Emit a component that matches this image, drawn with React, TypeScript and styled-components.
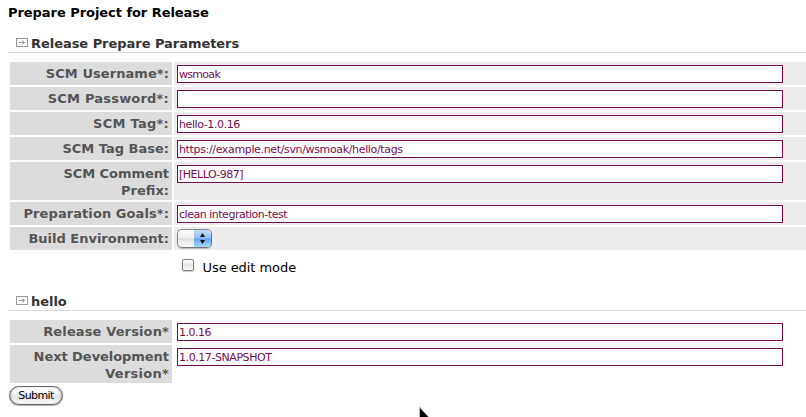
import React from "react";
import styled, { createGlobalStyle } from "styled-components";

const GlobalStyle = createGlobalStyle`
  * { box-sizing: border-box; }
  html, body { margin: 0; background: #fff; overflow: hidden; }
  body { font-family: Verdana, "DejaVu Sans", sans-serif; color: #000; }
`;

const Page = styled.main`
  position: relative;
  width: 806px;
  height: 417px;
  padding: 4px 0 0 8px;
  overflow: hidden;
`;

const Title = styled.h1`
  margin: 0;
  height: 29px;
  font-size: 13px;
  line-height: 18px;
  letter-spacing: -0.05px;
`;

const Heading = styled.h2`
  display: flex;
  align-items: center;
  gap: 3px;
  margin: 0 0 9px;
  padding: 2px 0 0 8px;
  height: 20px;
  border-bottom: 1px solid #d9d9d9;
  color: #333;
  font-size: 13px;
  line-height: 17px;
  letter-spacing: -0.04px;
  white-space: nowrap;
`;

const ArrowSvg = styled.svg`
  flex: none;
  width: 12px;
  height: 9px;
  margin-bottom: 2px;
`;

const Rows = styled.div`
  display: grid;
  gap: 2px;
  padding-left: 2px;
`;

const Row = styled.div<{ $tall?: boolean }>`
  display: grid;
  grid-template-columns: 162px 632px;
  gap: 2px;
  height: ${(p) => (p.$tall ? 38 : 23)}px;
`;

const Label = styled.label`
  padding: 3px 3px 0 0;
  background: #dcdcdc;
  color: #555;
  font-size: 13px;
  font-weight: bold;
  line-height: 17px;
  text-align: right;
`;

const LabelLine = styled.span<{ $spacing?: number }>`
  display: block;
  letter-spacing: ${(p) => p.$spacing ?? 0}px;
  white-space: nowrap;
`;

const Cell = styled.div<{ $plain?: boolean }>`
  padding: 3px 0 0 3px;
  background: ${(p) => (p.$plain ? "transparent" : "#ededed")};
`;

const Input = styled.input<{ $spacing?: number }>`
  display: block;
  width: 606px;
  height: 18px;
  margin: 0;
  padding: 1px 1px 0;
  border: 1px solid #720d4e;
  border-radius: 0;
  outline: 0;
  background: #fff;
  color: #720d4e;
  font: 11px Verdana, "DejaVu Sans", sans-serif;
  letter-spacing: ${(p) => p.$spacing ?? 0}px;
`;

const SelectButton = styled.button`
  display: flex;
  justify-content: flex-end;
  width: 35px;
  height: 19px;
  margin-top: -1px;
  padding: 0;
  border: 1px solid #888;
  border-color: #858585 #587ba8 #777 #858585;
  border-radius: 5px;
  background: linear-gradient(#fff, #eee 48%, #e1e1e1 52%, #fafafa);
  box-shadow: 0 1px 1px #bbb;
  overflow: hidden;
`;

const Stepper = styled.svg`
  width: 17px;
  height: 17px;
  background: linear-gradient(#c2defa, #8dc0f2 47%, #62a5e9 52%, #a5dcff);
`;

const EditMode = styled.label`
  display: flex;
  align-items: flex-start;
  height: 41px;
  padding: 9px 0 0 174px;
  font-size: 13px;
  line-height: 17px;
  letter-spacing: -0.06px;
`;

const Checkbox = styled.input`
  appearance: none;
  width: 12px;
  height: 12px;
  margin: 0 8.5px 0 0;
  border: 1px solid #7d7d7d;
  border-radius: 2px;
  background: linear-gradient(#fff, #e5e5e5 50%, #f8f8f8);
  box-shadow: 0 1px 1px #ccc;
`;

const Submit = styled.button`
  display: block;
  width: 54px;
  height: 19px;
  margin: 3px 0 0 1px;
  padding: 0;
  border: 1px solid #686868;
  border-radius: 10px;
  background: linear-gradient(#fff, #f0f0f0 48%, #e1e1e1 52%, #fafafa);
  box-shadow: 0 1px 1px #aaa, inset 1px 0 1px #aaa, inset -1px 0 1px #aaa;
  color: #000;
  font: 11px/17px Verdana, "DejaVu Sans", sans-serif;
  letter-spacing: -0.6px;
`;

const Pointer = styled.svg`
  position: absolute;
  left: 418px;
  top: 406px;
  width: 14px;
  height: 11px;
`;

const SectionArrow = () => (
  <ArrowSvg viewBox="0 0 12 9" fill="none">
    <rect x=".5" y=".5" width="11" height="8" stroke="#999" />
    <path d="M3 4.5h5.5M6.3 2.3l2.2 2.2-2.2 2.2" stroke="#888" strokeWidth=".9" />
  </ArrowSvg>
);

type Line = { text: string; spacing?: number };
type Field = { lines: Line[]; value: string; spacing?: number };

const parameters: Field[] = [
  { lines: [{ text: "SCM Username*:", spacing: 0.07 }], value: "wsmoak", spacing: -0.7 },
  { lines: [{ text: "SCM Password*:", spacing: 0.2 }], value: "" },
  { lines: [{ text: "SCM Tag*:", spacing: 0.25 }], value: "hello-1.0.16", spacing: -0.4 },
  { lines: [{ text: "SCM Tag Base:" }], value: "https://example.net/svn/wsmoak/hello/tags", spacing: -0.35 },
  { lines: [{ text: "SCM Comment", spacing: -0.06 }, { text: "Prefix:" }], value: "[HELLO-987]", spacing: -0.5 },
  { lines: [{ text: "Preparation Goals*:", spacing: 0.08 }], value: "clean integration-test", spacing: -0.48 },
];

const versions: Field[] = [
  { lines: [{ text: "Release Version*", spacing: 0.13 }], value: "1.0.16", spacing: -0.5 },
  { lines: [{ text: "Next Development", spacing: -0.05 }, { text: "Version*", spacing: 0.25 }], value: "1.0.17-SNAPSHOT", spacing: -0.43 },
];

const FieldRow = ({ field, plain }: { field: Field; plain?: boolean }) => (
  <Row $tall={field.lines.length > 1}>
    <Label>
      {field.lines.map((l) => <LabelLine key={l.text} $spacing={l.spacing}>{l.text}</LabelLine>)}
    </Label>
    <Cell $plain={plain}>
      <Input $spacing={field.spacing} defaultValue={field.value} spellCheck={false} />
    </Cell>
  </Row>
);

export default function App() {
  return (
    <Page>
      <GlobalStyle />
      <Title>Prepare Project for Release</Title>
      <Heading><SectionArrow />Release Prepare Parameters</Heading>
      <Rows>
        {parameters.map((f) => <FieldRow key={f.lines[0].text} field={f} />)}
        <Row>
          <Label><LabelLine>Build Environment:</LabelLine></Label>
          <Cell>
            <SelectButton aria-label="Build environment">
              <Stepper viewBox="0 0 17 17">
                <path d="M8.5 3 11 7H6zM6 10h5l-2.5 4z" fill="#111" />
              </Stepper>
            </SelectButton>
          </Cell>
        </Row>
      </Rows>
      <EditMode><Checkbox type="checkbox" />Use edit mode</EditMode>
      <Heading><SectionArrow />hello</Heading>
      <Rows>
        {versions.map((f) => <FieldRow key={f.lines[0].text} field={f} plain />)}
      </Rows>
      <Submit>Submit</Submit>
      <Pointer viewBox="0 0 14 11">
        <path d="M1.5 1v12H12.5z" fill="#000" stroke="#bbb" />
      </Pointer>
    </Page>
  );
}
